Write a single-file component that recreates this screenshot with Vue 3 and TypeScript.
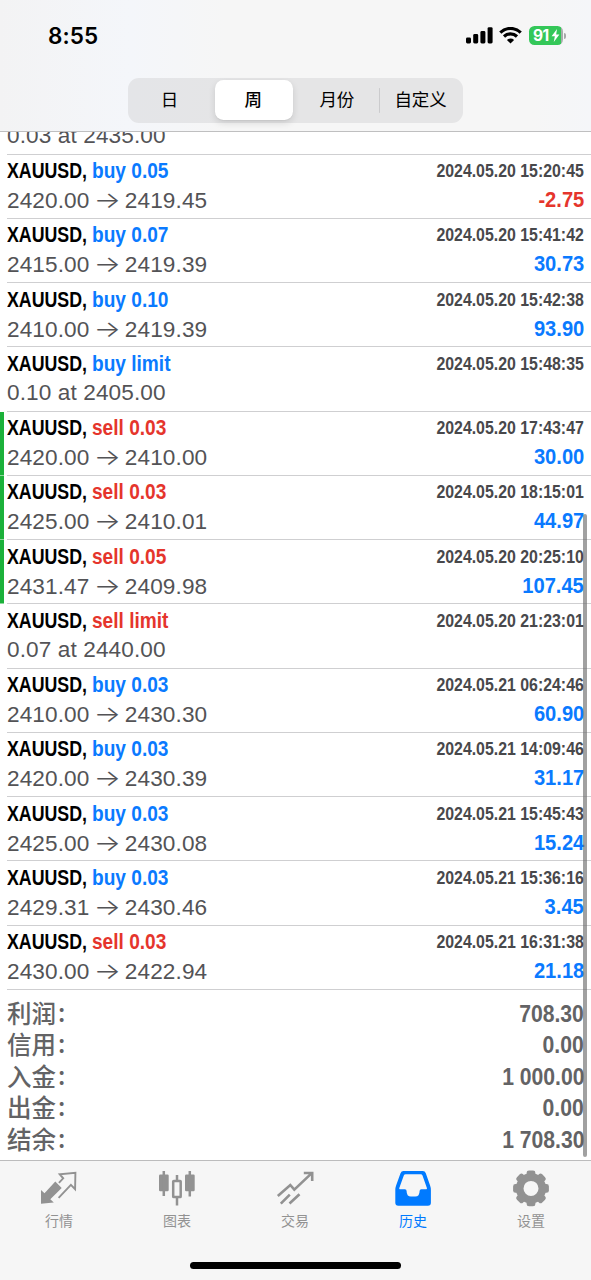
<script setup lang="ts">
type Side = 'buy' | 'sell'

interface Deal {
  side?: Side
  label?: string
  time?: string
  open?: string
  close?: string
  order?: string
  profit?: string
  marked?: boolean
}

const periods: string[] = ['日', '周', '月份', '自定义']
const activePeriod = 1

const deals: Deal[] = [
  { order: '0.03 at 2435.00' },
  { side: 'buy', label: 'buy 0.05', time: '2024.05.20 15:20:45', open: '2420.00', close: '2419.45', profit: '-2.75' },
  { side: 'buy', label: 'buy 0.07', time: '2024.05.20 15:41:42', open: '2415.00', close: '2419.39', profit: '30.73' },
  { side: 'buy', label: 'buy 0.10', time: '2024.05.20 15:42:38', open: '2410.00', close: '2419.39', profit: '93.90' },
  { side: 'buy', label: 'buy limit', time: '2024.05.20 15:48:35', order: '0.10 at 2405.00' },
  { side: 'sell', label: 'sell 0.03', time: '2024.05.20 17:43:47', open: '2420.00', close: '2410.00', profit: '30.00', marked: true },
  { side: 'sell', label: 'sell 0.03', time: '2024.05.20 18:15:01', open: '2425.00', close: '2410.01', profit: '44.97', marked: true },
  { side: 'sell', label: 'sell 0.05', time: '2024.05.20 20:25:10', open: '2431.47', close: '2409.98', profit: '107.45', marked: true },
  { side: 'sell', label: 'sell limit', time: '2024.05.20 21:23:01', order: '0.07 at 2440.00' },
  { side: 'buy', label: 'buy 0.03', time: '2024.05.21 06:24:46', open: '2410.00', close: '2430.30', profit: '60.90' },
  { side: 'buy', label: 'buy 0.03', time: '2024.05.21 14:09:46', open: '2420.00', close: '2430.39', profit: '31.17' },
  { side: 'buy', label: 'buy 0.03', time: '2024.05.21 15:45:43', open: '2425.00', close: '2430.08', profit: '15.24' },
  { side: 'buy', label: 'buy 0.03', time: '2024.05.21 15:36:16', open: '2429.31', close: '2430.46', profit: '3.45' },
  { side: 'sell', label: 'sell 0.03', time: '2024.05.21 16:31:38', open: '2430.00', close: '2422.94', profit: '21.18' },
]

const totals: { name: string; value: string }[] = [
  { name: '利润', value: '708.30' },
  { name: '信用', value: '0.00' },
  { name: '入金', value: '1 000.00' },
  { name: '出金', value: '0.00' },
  { name: '结余', value: '1 708.30' },
]

const teeth: number[] = [0, 45, 90, 135, 180, 225, 270, 315]
</script>

<template>
  <div class="screen">
    <header class="header">
      <div class="status">
        <span class="clock">8:55</span>
        <div class="indicators">
          <svg class="signal" width="27" height="17" viewBox="0 0 27 17">
            <rect x="0" y="10.5" width="5" height="6" rx="1.4" />
            <rect x="7.2" y="7" width="5" height="9.5" rx="1.4" />
            <rect x="14.4" y="4" width="5" height="12.5" rx="1.4" />
            <rect x="21.6" y="0.2" width="5" height="16.3" rx="1.4" />
          </svg>
          <svg class="wifi" width="23" height="17" viewBox="0 0 23 17">
            <path d="M1.3 5.6a14.6 14.6 0 0 1 20.4 0" />
            <path d="M5 9.5a9.4 9.4 0 0 1 13 0" />
            <path class="dot" d="M11.5 16.6L7.9 13a5.1 5.1 0 0 1 7.2 0z" />
          </svg>
          <div class="battery">
            <span class="level">91</span>
            <svg width="9" height="13" viewBox="0 0 8 12"><path d="M5.4 0L0.4 6.8h3L2.4 12 7.6 5.1h-3z" /></svg>
          </div>
          <i class="nub"></i>
        </div>
      </div>
      <nav class="segments">
        <button
          v-for="(period, i) in periods"
          :key="period"
          class="segment"
          :class="{ active: i === activePeriod, divided: i === 3 }"
        >{{ period }}</button>
      </nav>
    </header>

    <main class="history">
      <section class="deals">
        <article
          v-for="(deal, i) in deals"
          :key="i"
          class="deal"
          :class="{ marked: deal.marked, partial: !deal.time }"
        >
          <div class="body">
            <div v-if="deal.time" class="line">
              <span class="symbol">XAUUSD,</span>
              <span class="side" :class="deal.side">{{ deal.label }}</span>
              <span class="time">{{ deal.time }}</span>
            </div>
            <div class="line">
              <span v-if="deal.order" class="prices">{{ deal.order }}</span>
              <span v-else class="prices">{{ deal.open }} <span class="arrow">→</span> {{ deal.close }}</span>
              <span v-if="deal.profit" class="profit" :class="{ loss: deal.profit.startsWith('-') }">{{ deal.profit }}</span>
            </div>
          </div>
        </article>
      </section>
      <section class="totals">
        <div v-for="total in totals" :key="total.name" class="total">
          <span class="name">{{ total.name }}<span class="colon">:</span></span>
          <span class="value">{{ total.value }}</span>
        </div>
      </section>
      <div class="scrollbar"></div>
    </main>

    <footer class="footer">
      <nav class="tabs">
        <a class="tab">
          <svg viewBox="0 0 40 40">
            <path class="fill" d="M2 35.7V22l3.5 3.2L16.3 13.6l6.4 6.4L11.3 31.2l3.5 3.4z" />
            <path class="thin" d="M19.9 14.8l4.3-4.5-3.5-4.1 15.7-1.3-.3 16.2-4.2-4.3-12.3 13" />
          </svg>
          <span>行情</span>
        </a>
        <a class="tab">
          <svg viewBox="0 0 40 40">
            <rect class="fill" x="2" y="6.6" width="9.7" height="16.6" rx="1.2" />
            <rect class="fill" x="28" y="6.6" width="9.7" height="16.6" rx="1.2" />
            <path class="wick" d="M6.8 3v25M32.8 3v25.4M20 7v5M20 30v7.6" />
            <rect class="wick" x="16.2" y="12.9" width="7.5" height="16.2" rx=".6" />
          </svg>
          <span>图表</span>
        </a>
        <a class="tab">
          <svg viewBox="0 0 40 40">
            <path class="trend" d="M2.8 28L15.3 17l4 4.6L36.5 5.4M28.8 5h8.4v8M5.8 35.7l9-9M14.5 35.5l10-9.2" />
          </svg>
          <span>交易</span>
        </a>
        <a class="tab current">
          <svg viewBox="0 0 40 40">
            <path
              class="fill"
              fill-rule="evenodd"
              d="M10.5 3h19.3q2.2 0 3 2.2l4.3 12.3q.8 2.200.8 4.500v12.700q0 3-3 3H5.300q-3 0-3-3V22q0-2.300.8-4.500L7.500 5.200Q8.300 3 10.500 3zM12.600 6.200q-1.300 0-1.800 1.400L6.300 20q-.4 1.200.7 1.200h4.900q1.700 0 1.700 1.800 0 5.600 4.300 5.600h4.400q4.300 0 4.300-5.600 0-1.800 1.700-1.800h4.900q1.100 0 .7-1.200L29.500 7.600q-.5-1.400-1.800-1.400z"
            />
          </svg>
          <span>历史</span>
        </a>
        <a class="tab">
          <svg viewBox="0 0 40 40">
            <circle class="ring" cx="20" cy="20.4" r="11.3" />
            <rect
              v-for="angle in teeth"
              :key="angle"
              class="fill"
              x="15.6"
              y="2.5"
              width="8.8"
              height="7"
              rx="2.4"
              :transform="`rotate(${angle} 20 20.4)`"
            />
          </svg>
          <span>设置</span>
        </a>
      </nav>
      <div class="home"></div>
    </footer>
  </div>
</template>

<style>
body {
  margin: 0;
  background: #fff;
}
</style>

<style scoped>
.screen {
  box-sizing: border-box;
  width: 591px;
  height: 1280px;
  display: flex;
  flex-direction: column;
  overflow: hidden;
  background: #fff;
  font-family: "Liberation Sans", "Noto Sans CJK SC", sans-serif;
}

.header {
  box-sizing: border-box;
  flex: none;
  height: 132px;
  z-index: 1;
  display: flex;
  flex-direction: column;
  align-items: center;
  border-bottom: 1px solid #bfbfc0;
  background: linear-gradient(90deg, #f3f3f4 0, #f4f6fa 22%, #f6f6f6 38%, #f6f6f6 90%, #f5f6f9 100%);
}

.status {
  box-sizing: border-box;
  width: 100%;
  height: 77px;
  padding: 22px 25px 0 48px;
  display: flex;
  justify-content: space-between;
  align-items: flex-start;
}

.clock {
  font: 600 22.5px/28px Inter, sans-serif;
  letter-spacing: 0.1px;
}

.indicators {
  display: flex;
  align-items: center;
  height: 28px;
}

.signal {
  margin-top: -1px;
}

.wifi {
  margin: -1px 0 0 6.5px;
  fill: none;
  stroke: #000;
  stroke-width: 3.2;
}

.wifi .dot {
  fill: #000;
  stroke: none;
}

.battery {
  box-sizing: border-box;
  width: 34px;
  height: 19px;
  margin: -1px 0 0 7px;
  padding-left: 4px;
  border-radius: 5.5px;
  display: flex;
  align-items: center;
  background: linear-gradient(90deg, #34c759 32px, #a7adab 32px);
  color: #fff;
}

.battery svg {
  fill: #fff;
}

.level {
  width: 18px;
  font: 700 15.5px/19px Inter, sans-serif;
  letter-spacing: -0.5px;
}

.nub {
  width: 2px;
  height: 6px;
  margin: -1px 0 0 1px;
  border-radius: 0 2px 2px 0;
  background: #a8a8aa;
}

.segments {
  box-sizing: border-box;
  width: 335px;
  height: 45px;
  margin-top: 0.5px;
  padding: 2.5px 0;
  border-radius: 11px;
  display: grid;
  grid-template-columns: repeat(4, 1fr);
  background: linear-gradient(90deg, #e4e5e8, #e5e5e6 35%);
}

.segment {
  box-sizing: border-box;
  margin: 0 3px;
  padding: 0 1px 2px 0;
  border: 0;
  border-radius: 8.5px;
  background: none;
  color: #000;
  font: 400 17.5px/38px "Noto Sans CJK SC", sans-serif;
  white-space: nowrap;
}

.segment.active {
  background: #fff;
  box-shadow: 0 3px 7px rgba(0, 0, 0, 0.12), 0 1px 1px rgba(0, 0, 0, 0.04);
  font-weight: 500;
}

.segment.divided {
  background: linear-gradient(#cbcbcd, #cbcbcd) 0 50% / 1px 25px no-repeat;
  margin: 0;
}

.history {
  position: relative;
  flex: 1;
  min-height: 0;
  overflow: hidden;
}

.deals {
  margin-top: -11px;
}

.deal {
  box-sizing: border-box;
  height: 64.25px;
  padding-left: 7px;
}

.deal.partial {
  height: 33.5px;
}

.deal.marked {
  background: linear-gradient(#1cb13a, #1cb13a) 0 0 / 4px calc(100% - 0.5px) no-repeat;
}

.body {
  box-sizing: border-box;
  height: 100%;
  padding: 1.6px 7px 0 0;
  border-bottom: 1px solid #cfcfd1;
}

.partial .body {
  padding-top: 0;
}

.line {
  display: flex;
  height: 29px;
  line-height: 29px;
  white-space: nowrap;
}

.symbol {
  width: 84.5px;
  color: #000;
  font-size: 22.5px;
  font-weight: 700;
  transform: scaleX(0.79);
  transform-origin: 0 50%;
}

.side {
  font-size: 22px;
  font-weight: 700;
  transform: scaleX(0.868);
  transform-origin: 0 50%;
}

.buy {
  color: #0a7aff;
}

.sell {
  color: #e5352c;
}

.time {
  margin-left: auto;
  color: #48484b;
  font-size: 18.5px;
  font-weight: 700;
  transform: scaleX(0.858);
  transform-origin: 100% 50%;
}

.prices {
  color: #535356;
  font-size: 22.6px;
  letter-spacing: 0.11px;
}

.arrow {
  display: inline-block;
  width: 22.6px;
  text-align: center;
  font-family: Inter, sans-serif;
  font-weight: 300;
  transform: scaleX(1.26);
}

.profit {
  margin-left: auto;
  color: #0a7aff;
  font-size: 22.5px;
  line-height: 30px;
  font-weight: 700;
  transform: scaleX(0.895);
  transform-origin: 100% 50%;
}

.profit.loss {
  color: #e5352c;
}

.totals {
  padding: 8px 7px 0;
}

.total {
  display: flex;
  justify-content: space-between;
  height: 31.5px;
  line-height: 32.5px;
  color: #636365;
}

.name {
  font: 500 24.5px/30px "Noto Sans CJK SC", sans-serif;
}

.colon {
  display: inline-block;
  margin-left: 3px;
  transform: translate(-1px, -1px);
}

.value {
  font-size: 23.5px;
  font-weight: 700;
  transform: scaleX(0.9);
  transform-origin: 100% 50%;
}

.scrollbar {
  position: absolute;
  right: 4px;
  top: 382px;
  width: 4px;
  height: 643px;
  border-radius: 2px;
  background: rgba(110, 110, 110, 0.65);
}

.footer {
  box-sizing: border-box;
  flex: none;
  height: 120px;
  display: flex;
  flex-direction: column;
  align-items: center;
  border-top: 1.5px solid #bcbcbd;
  background: #f6f6f6;
}

.tabs {
  display: flex;
  align-self: stretch;
  height: 100px;
  margin-right: 1px;
}

.tab {
  flex: 1;
  display: flex;
  flex-direction: column;
  align-items: center;
  padding-top: 7px;
  color: #929292;
  font: 400 14px/20px "Noto Sans CJK SC", sans-serif;
}

.tab svg {
  width: 40px;
  height: 40px;
  margin-bottom: 2px;
}

.current {
  color: #007aff;
}

.fill {
  fill: currentColor;
}

.thin,
.wick,
.trend,
.ring {
  fill: none;
  stroke: currentColor;
}

.thin {
  stroke-width: 1.9;
}

.wick {
  stroke-width: 2.5;
}

.trend {
  stroke-width: 2.6;
}

.ring {
  stroke-width: 7.6;
}

.home {
  width: 211px;
  height: 7px;
  margin-top: 0.5px;
  border-radius: 4px;
  background: #000;
}
</style>
